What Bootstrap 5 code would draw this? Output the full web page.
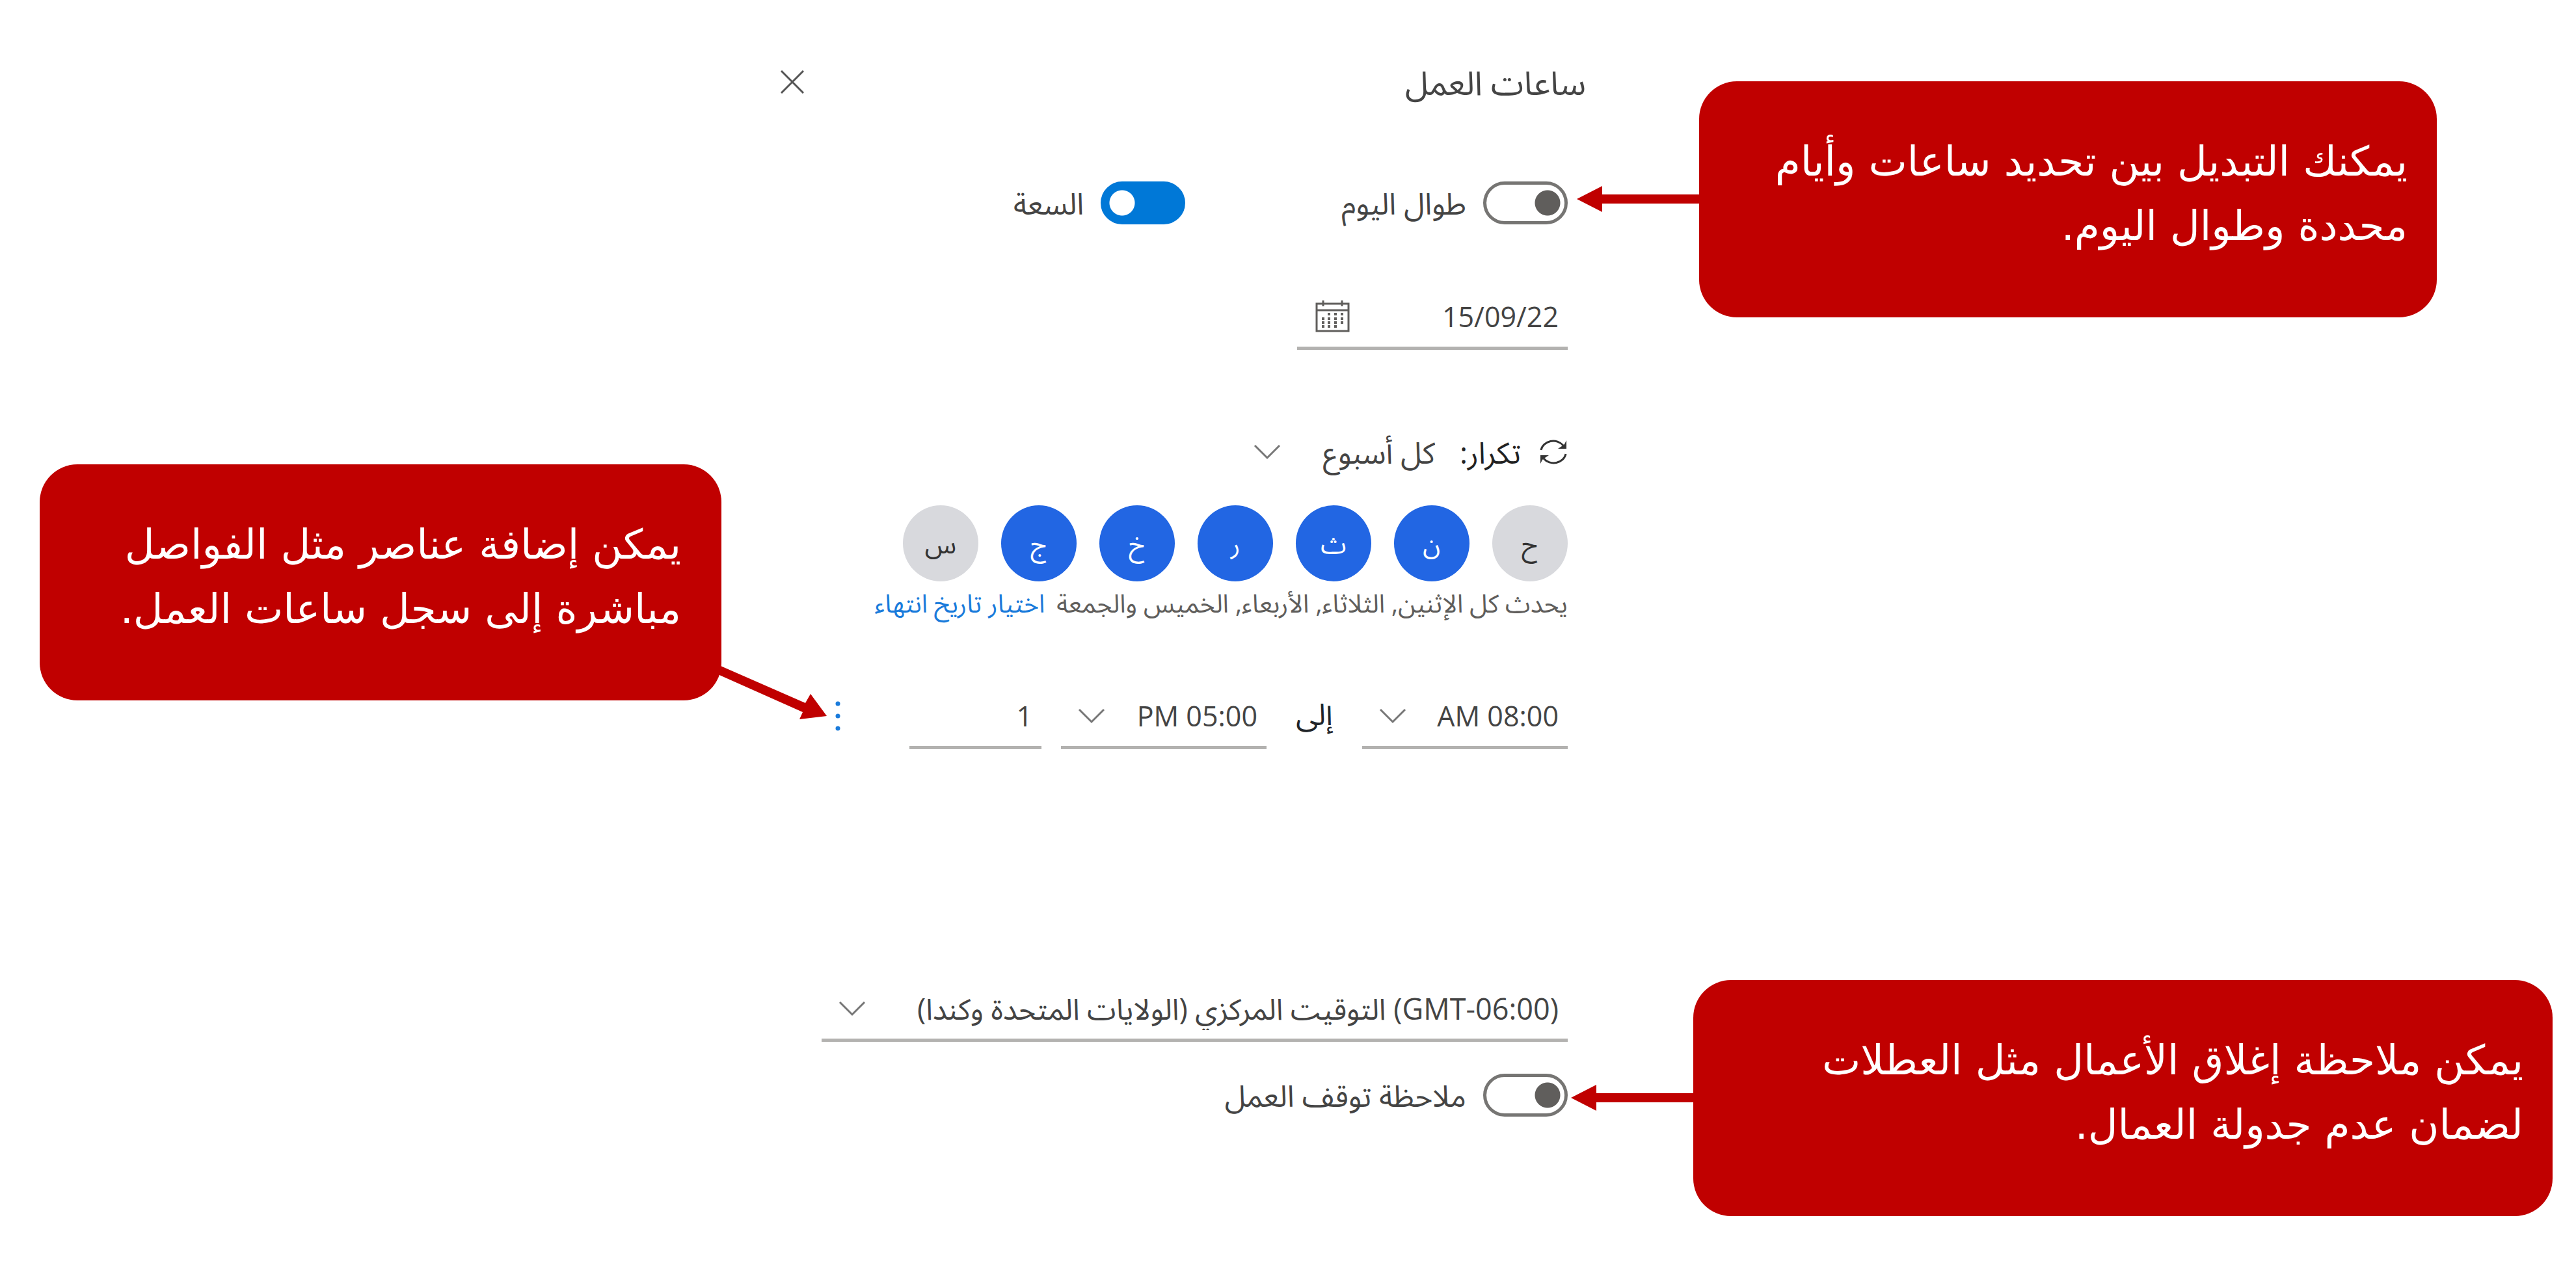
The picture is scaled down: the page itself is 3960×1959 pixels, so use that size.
<!DOCTYPE html>
<html lang="ar" dir="rtl">
<head>
<meta charset="utf-8">
<meta name="viewport" content="width=device-width, initial-scale=1">
<title>ساعات العمل</title>
<link href="https://cdn.jsdelivr.net/npm/bootstrap@5.3.0/dist/css/bootstrap.min.css" rel="stylesheet">
<style>
  :root { --ink: #444; --line: #b3b2b0; --note: #c00000; --pick: #2266e3; }
  body { font-family: "Open Sans", "Noto Sans Arabic", sans-serif; font-size: 46px; line-height: 66px; color: var(--ink); background: #fff; }

  .stage { display: grid; grid-template-columns: 1522fr 1238fr 1200fr; padding-bottom: 89px; }
  .notes-start { padding: 125px 36px 0 165px; }
  .notes-end { padding: 714px 91px 0 61px; }

  /* callouts */
  .callout { position: relative; min-height: 363px; padding: 74px 45px; border-radius: 58px; background: var(--note); color: #fff;
    font-family: "DejaVu Sans", sans-serif; font-size: 63px; line-height: 99px; }
  .callout p { margin: 0; white-space: nowrap; }
  .callout svg { position: absolute; fill: var(--note); }
  .note-hours { margin-bottom: 1019px; margin-inline: 178px 9px; }
  .note-breaks { padding-inline: 62px 45px; }
  .arrow-side { right: 100%; width: 188px; height: 42px; top: 160px; }
  .arrow-down { left: calc(100% - 12px); top: 304px; }

  /* working hours panel */
  .panel { padding-top: 90px; }
  .panel-body-rows { padding-inline: 28px 0; }
  .panel h1 { font-size: 51px; line-height: 72px; margin: 0; font-weight: 400; }
  .icon-btn { border: 0; background: none; padding: 0; line-height: 0; color: inherit; }
  .toggle { display: flex; align-items: center; gap: 26px; }
  .toggle .form-check-input { width: 130px; height: 66px; margin: 0; float: none; flex: none; border: 5px solid #767573; border-radius: 33px;
    background: radial-gradient(circle 20px at calc(100% - 31px) 50%, #605e5c 19px, transparent 20px) border-box #fff; }
  .toggle .form-check-input:checked { border-color: #0078d7;
    background: radial-gradient(circle 20px at 33px 50%, #fff 19px, transparent 20px) border-box #0078d7; }
  .toggle-pair { margin-top: 117px; gap: 240px; }

  .line-field { display: flex; align-items: center; height: 90px; border-bottom: 5px solid var(--line); padding: 0 14px 8px 0; font-size: 43px; }
  .line-field input, .line-field select { width: 100%; min-width: 0; border: 0; background: none; color: inherit; font-size: inherit; padding: 0; outline: 0; appearance: none; line-height: 66px; }
  .line-field svg { flex: none; pointer-events: none; }
  .date-field { width: 416px; margin-top: 103px; padding-left: 27px; }
  .repeat-row { margin-top: 121px; height: 72px; }
  .repeat-row label { color: #222; margin-inline: 28px 38px; }
  .repeat-row select { border: 0; background: none; color: inherit; padding: 0; appearance: none; width: 237px; height: 88px; line-height: 88px; }
  .day-row { margin-top: 46px; gap: 35px; }
  .day { width: 116px; height: 117px; border: 0; border-radius: 50%; padding: 0; background: #d8d9dd; color: #333; font-size: 40px; line-height: 66px; }
  .day[aria-pressed="true"] { background: var(--pick); color: #fff; }
  .summary { font-size: 39px; line-height: 66px; color: #605e5c; white-space: nowrap; }
  .summary a { color: #1a7bdb; text-decoration: none; margin-inline-start: 18px; }
  .time-row { margin-top: 102px; }
  .time-row label { width: 147px; padding-bottom: 20px; }
  .time-field { width: 316px; padding-left: 26px; }
  .count-field { width: 203px; margin-inline-start: 30px; }
  .more { margin-inline-start: 106px; padding-bottom: 13px; }
  .zone-field { margin-top: 360px; margin-inline-end: 63px; padding-left: 26px; font-size: 45px; }
  .closure { margin-top: 49px; }
  .chev { width: 42px; height: 24px; fill: none; stroke: #777; stroke-width: 3; }
</style>
</head>
<body>
<main class="stage">
  <aside class="notes-start">
    <div class="callout note-hours">
      <p>يمكنك التبديل بين تحديد ساعات وأيام<br>محددة وطوال اليوم.</p>
      <svg class="arrow-side" viewBox="0 0 188 42"><path d="M188 14H39V1L0 21l39 20V28h149z"/></svg>
    </div>
    <div class="callout note-closure">
      <p>يمكن ملاحظة إغلاق الأعمال مثل العطلات<br>لضمان عدم جدولة العمال.</p>
      <svg class="arrow-side" viewBox="0 0 188 42"><path d="M188 14H39V1L0 21l39 20V28h149z"/></svg>
    </div>
  </aside>

  <section class="panel" aria-labelledby="panel-title">
    <header class="d-flex justify-content-between align-items-center">
      <h1 id="panel-title">ساعات العمل</h1>
      <button type="button" class="icon-btn" aria-label="إغلاق"><svg width="36" height="36" viewBox="0 0 36 36" fill="none" stroke="#555" stroke-width="3"><path d="M1 1l34 34M35 1L1 35"/></svg></button>
    </header>

    <form class="panel-body-rows">
      <div class="d-flex toggle-pair">
        <div class="toggle"><input class="form-check-input" type="checkbox" role="switch" id="allDay"><label for="allDay">طوال اليوم</label></div>
        <div class="toggle"><input class="form-check-input" type="checkbox" role="switch" id="capacity" checked><label for="capacity">السعة</label></div>
      </div>

      <div class="line-field date-field">
        <input type="text" value="15/09/22" aria-label="التاريخ">
        <button type="button" class="icon-btn" aria-label="اختيار التاريخ"><svg width="54" height="50" viewBox="0 0 54 50" fill="none" stroke="#605e5c" stroke-width="3"><path d="M3 5h49v42H3zM3 15h49M13 0v9M42 0v9"/><path stroke-width="4" d="M20 21h4M30 21h4M40 21h4M11 28h4M20 28h4M30 28h4M40 28h4M11 34h4M20 34h4M30 34h4M40 34h4M11 40h4M20 40h4M30 40h4"/></svg></button>
      </div>

      <div class="d-flex align-items-center repeat-row">
        <svg width="44" height="44" viewBox="0 0 44 44" fill="none" stroke="#333" stroke-width="3"><path d="M3 19A19 17 0 0 1 37 12M41 25A19 17 0 0 1 7 32"/><path fill="#333" stroke="none" d="M42 4v13H29l6-4 4-3zM2 40V27h13l-6 4-4 3z"/></svg>
        <label for="repeat">تكرار:</label>
        <select id="repeat"><option>كل أسبوع</option></select>
        <svg class="chev" viewBox="0 0 42 24"><path d="M2 2l19 19L40 2"/></svg>
      </div>

      <div class="d-flex day-row" role="group" aria-label="أيام الأسبوع">
        <button type="button" class="day" aria-pressed="false">ح</button>
        <button type="button" class="day" aria-pressed="true">ن</button>
        <button type="button" class="day" aria-pressed="true">ث</button>
        <button type="button" class="day" aria-pressed="true">ر</button>
        <button type="button" class="day" aria-pressed="true">خ</button>
        <button type="button" class="day" aria-pressed="true">ج</button>
        <button type="button" class="day" aria-pressed="false">س</button>
      </div>
      <div class="summary">يحدث كل الإثنين, الثلاثاء, الأربعاء, الخميس والجمعة<a href="#">اختيار تاريخ انتهاء</a></div>

      <div class="d-flex align-items-center time-row">
        <div class="line-field time-field"><select id="from" aria-label="من"><option>08:00 AM</option></select><svg class="chev" viewBox="0 0 42 24"><path d="M2 2l19 19L40 2"/></svg></div>
        <label for="to" class="text-center text-dark">إلى</label>
        <div class="line-field time-field"><select id="to"><option>05:00 PM</option></select><svg class="chev" viewBox="0 0 42 24"><path d="M2 2l19 19L40 2"/></svg></div>
        <div class="line-field count-field"><input type="text" value="1" aria-label="السعة"></div>
        <button type="button" class="icon-btn more" aria-label="خيارات إضافية"><svg width="8" height="46" viewBox="0 0 8 46" fill="#1a7bdb"><circle cx="4" cy="4" r="3.5"/><circle cx="4" cy="23" r="3.5"/><circle cx="4" cy="42" r="3.5"/></svg></button>
      </div>

      <div class="line-field zone-field"><select aria-label="المنطقة الزمنية"><option>(GMT-06:00) التوقيت المركزي (الولايات المتحدة وكندا)</option></select><svg class="chev" viewBox="0 0 42 24"><path d="M2 2l19 19L40 2"/></svg></div>

      <div class="toggle closure"><input class="form-check-input" type="checkbox" role="switch" id="closure"><label for="closure">ملاحظة توقف العمل</label></div>
    </form>
  </section>

  <aside class="notes-end">
    <div class="callout note-breaks">
      <p>يمكن إضافة عناصر مثل الفواصل<br>مباشرة إلى سجل ساعات العمل.</p>
      <svg class="arrow-down" width="174" height="88" viewBox="0 0 174 88"><path d="M4 3L141 63l8-14 25 34-42 5 5-11L0 16z"/></svg>
    </div>
  </aside>
</main>
<script src="https://cdn.jsdelivr.net/npm/bootstrap@5.3.0/dist/js/bootstrap.bundle.min.js"></script>
</body>
</html>
